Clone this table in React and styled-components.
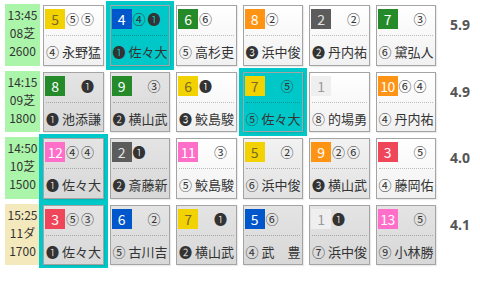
import React from 'react';
import styled, { createGlobalStyle } from 'styled-components';

const Global = createGlobalStyle`
  html, body { margin: 0; padding: 0; background: #fff; }
  body {
    font-family: "Noto Sans CJK JP", "Noto Sans", "DejaVu Sans", sans-serif;
    color: #333;
    overflow: hidden;
  }
`;

const WAKU = {
  white: { bg: '#efefef', fg: '#9a9a9a' },
  black: { bg: '#5c5c5c', fg: '#e4e4e4' },
  red: { bg: '#f0465a', fg: '#ffffff' },
  blue: { bg: '#0057cc', fg: '#ffffff' },
  yellow: { bg: '#f2d200', fg: '#7a6a2a' },
  green: { bg: '#248a2a', fg: '#ffffff' },
  orange: { bg: '#ff9414', fg: '#ffffff' },
  pink: { bg: '#ff6ec9', fg: '#ffffff' },
};

const TONES = {
  white: 'linear-gradient(#ffffff, #f1f1f1)',
  light: 'linear-gradient(#f2f2f2, #e2e2e2)',
  gray: 'linear-gradient(#e4e4e4, #d8d8d8)',
  cyan: '#00c8c8',
};

const Board = styled.div`
  display: grid;
  grid-template-columns: 40px repeat(6, 66.5px) 1fr;
  grid-auto-rows: 66.5px;
  padding-top: 2px;
  width: 480px;
`;

const TimeCell = styled.div`
  margin: 2px 0 3px 5px;
  background: ${(p) => (p.$surface === 'dirt' ? '#f3e9bc' : '#aaf5aa')};
  display: flex;
  flex-direction: column;
  align-items: center;
  justify-content: center;
  padding-bottom: 3px;
  font-size: 12px;
  line-height: 18px;
  color: #333;
`;

const Slot = styled.div`
  display: flex;
  padding: ${(p) => (p.$hl ? '4px' : '3px')};
  margin: ${(p) => (p.$hl ? '-1px' : '0')};
  background: ${(p) => (p.$hl ? '#00c8c8' : 'transparent')};
`;

const Card = styled.div`
  flex: 1;
  min-width: 0;
  display: flex;
  flex-direction: column;
  border: 1px solid #a4a4a4;
  background: ${(p) => TONES[p.$tone]};
  padding: 2px 1px 0;
  box-shadow: 1px 1px 1px rgba(0, 0, 0, 0.08);
`;

const TopRow = styled.div`
  display: flex;
  align-items: center;
  height: 22px;
`;

const Badge = styled.span`
  width: 20px;
  height: 20px;
  flex: none;
  display: flex;
  align-items: center;
  justify-content: center;
  font-size: 14px;
  letter-spacing: -0.5px;
  background: ${(p) => WAKU[p.$waku].bg};
  color: ${(p) => WAKU[p.$waku].fg};
`;

const Mark = styled.span`
  width: 15px;
  flex: none;
  text-align: center;
  font-size: 13px;
  line-height: 20px;
  color: #333;
`;

const Divider = styled.div`
  margin: 5px 1px 0;
  border-top: 1px dotted rgba(0, 0, 0, 0.25);
`;

const BottomRow = styled.div`
  display: flex;
  align-items: center;
  gap: 3px;
  padding: 7px 1px 0;
  font-size: 13px;
  line-height: 18px;
  white-space: nowrap;
  color: #333;
`;

const Score = styled.div`
  padding: 14px 0 0 11px;
  font-family: "Noto Sans", "DejaVu Sans", sans-serif;
  font-weight: bold;
  font-size: 14px;
  line-height: 18px;
  color: #555;
`;

const rows = [
  {
    time: '13:45', course: '08芝', dist: '2600', surface: 'turf', score: '5.9',
    cells: [
      { n: 5, w: 'yellow', a: '⑤', b: '⑤', mark: '④', name: '永野猛', tone: 'white' },
      { n: 4, w: 'blue', a: '④', b: '❶', mark: '❶', name: '佐々大', tone: 'cyan', hl: true },
      { n: 6, w: 'green', a: '⑥', mark: '⑤', name: '高杉吏', tone: 'white' },
      { n: 8, w: 'orange', a: '②', mark: '❸', name: '浜中俊', tone: 'white' },
      { n: 2, w: 'black', b: '②', mark: '❷', name: '丹内祐', tone: 'white' },
      { n: 7, w: 'green', b: '③', mark: '⑥', name: '黛弘人', tone: 'white' },
    ],
  },
  {
    time: '14:15', course: '09芝', dist: '1800', surface: 'turf', score: '4.9',
    cells: [
      { n: 8, w: 'green', b: '❶', mark: '❶', name: '池添謙', tone: 'gray' },
      { n: 9, w: 'green', b: '③', mark: '❷', name: '横山武', tone: 'gray' },
      { n: 6, w: 'yellow', a: '❶', mark: '❸', name: '鮫島駿', tone: 'white' },
      { n: 7, w: 'yellow', b: '⑤', mark: '⑤', name: '佐々大', tone: 'cyan', hl: true },
      { n: 1, w: 'white', mark: '⑧', name: '的場勇', tone: 'white' },
      { n: 10, w: 'orange', a: '⑥', b: '④', mark: '④', name: '丹内祐', tone: 'white' },
    ],
  },
  {
    time: '14:50', course: '10芝', dist: '1500', surface: 'turf', score: '4.0',
    cells: [
      { n: 12, w: 'pink', a: '④', b: '④', mark: '❶', name: '佐々大', tone: 'gray', hl: true },
      { n: 2, w: 'black', a: '❶', mark: '❷', name: '斎藤新', tone: 'gray' },
      { n: 11, w: 'pink', b: '③', mark: '⑤', name: '鮫島駿', tone: 'white' },
      { n: 5, w: 'yellow', b: '②', mark: '⑥', name: '浜中俊', tone: 'light' },
      { n: 9, w: 'orange', a: '②', b: '⑥', mark: '❸', name: '横山武', tone: 'light' },
      { n: 3, w: 'red', b: '⑤', mark: '④', name: '藤岡佑', tone: 'white' },
    ],
  },
  {
    time: '15:25', course: '11ダ', dist: '1700', surface: 'dirt', score: '4.1',
    cells: [
      { n: 3, w: 'red', a: '⑤', b: '③', mark: '❶', name: '佐々大', tone: 'gray', hl: true },
      { n: 6, w: 'blue', b: '②', mark: '⑤', name: '古川吉', tone: 'gray' },
      { n: 7, w: 'yellow', b: '❶', mark: '❷', name: '横山武', tone: 'gray' },
      { n: 5, w: 'blue', a: '⑥', mark: '④', name: '武　豊', tone: 'gray' },
      { n: 1, w: 'white', a: '❶', mark: '⑦', name: '浜中俊', tone: 'gray' },
      { n: 13, w: 'pink', b: '⑤', mark: '⑨', name: '小林勝', tone: 'gray' },
    ],
  },
];

function HorseCell({ c }) {
  return (
    <Slot $hl={c.hl}>
      <Card $tone={c.tone}>
        <TopRow>
          <Badge $waku={c.w}>{c.n}</Badge>
          <Mark>{c.a || ''}</Mark>
          <Mark>{c.b || ''}</Mark>
        </TopRow>
        <Divider />
        <BottomRow>
          <span>{c.mark}</span>
          <span>{c.name}</span>
        </BottomRow>
      </Card>
    </Slot>
  );
}

export default function App() {
  return (
    <>
      <Global />
      <Board>
        {rows.map((r) => (
          <React.Fragment key={r.time}>
            <TimeCell $surface={r.surface}>
              <span>{r.time}</span>
              <span>{r.course}</span>
              <span>{r.dist}</span>
            </TimeCell>
            {r.cells.map((c, i) => (
              <HorseCell key={i} c={c} />
            ))}
            <Score>{r.score}</Score>
          </React.Fragment>
        ))}
      </Board>
    </>
  );
}
